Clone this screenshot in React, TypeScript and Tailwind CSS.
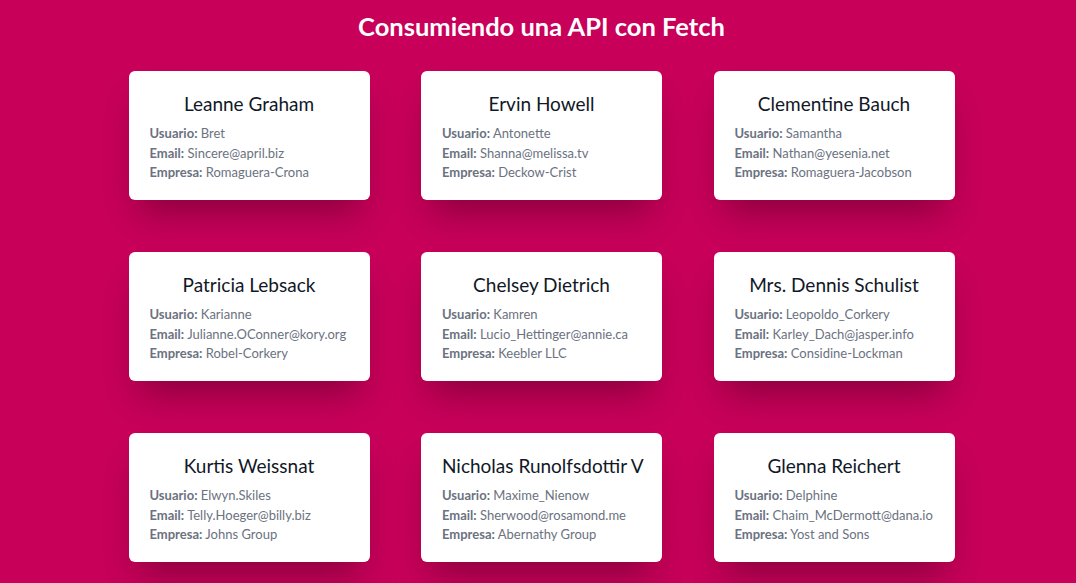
const users = [
  { name: 'Leanne Graham', username: 'Bret', email: 'Sincere@april.biz', company: 'Romaguera-Crona' },
  { name: 'Ervin Howell', username: 'Antonette', email: 'Shanna@melissa.tv', company: 'Deckow-Crist' },
  { name: 'Clementine Bauch', username: 'Samantha', email: 'Nathan@yesenia.net', company: 'Romaguera-Jacobson' },
  { name: 'Patricia Lebsack', username: 'Karianne', email: 'Julianne.OConner@kory.org', company: 'Robel-Corkery' },
  { name: 'Chelsey Dietrich', username: 'Kamren', email: 'Lucio_Hettinger@annie.ca', company: 'Keebler LLC' },
  { name: 'Mrs. Dennis Schulist', username: 'Leopoldo_Corkery', email: 'Karley_Dach@jasper.info', company: 'Considine-Lockman' },
  { name: 'Kurtis Weissnat', username: 'Elwyn.Skiles', email: 'Telly.Hoeger@billy.biz', company: 'Johns Group' },
  { name: 'Nicholas Runolfsdottir V', username: 'Maxime_Nienow', email: 'Sherwood@rosamond.me', company: 'Abernathy Group' },
  { name: 'Glenna Reichert', username: 'Delphine', email: 'Chaim_McDermott@dana.io', company: 'Yost and Sons' },
];

type User = (typeof users)[number];

function UserCard({ user }: { user: User }) {
  return (
    <div className="bg-white rounded-md px-[21px] pt-[20px] pb-[17.5px] shadow-[0_22px_36px_-10px_rgba(60,0,25,0.45)] whitespace-nowrap">
      <h2 className="text-center text-[19px] leading-[26px] text-[#111827] mb-[7px]">{user.name}</h2>
      <div className="text-[13px] leading-[19.5px] text-[#6b7280]">
        <p>
          <span className="font-bold">Usuario:</span> {user.username}
        </p>
        <p>
          <span className="font-bold">Email:</span> {user.email}
        </p>
        <p>
          <span className="font-bold">Empresa:</span> {user.company}
        </p>
      </div>
    </div>
  );
}

export default function App() {
  return (
    <div className="min-h-[583px] bg-[#c8005a] pl-[7px] pt-[9px] pb-6 font-['Lato',sans-serif]">
      <h1 className="text-center text-white font-bold text-[25.5px] leading-[34px]">Consumiendo una API con Fetch</h1>
      <div className="mt-[28px] grid grid-cols-[repeat(3,241px)] justify-center gap-x-[51.5px] gap-y-[52px]">
        {users.map((u) => (
          <UserCard key={u.email} user={u} />
        ))}
      </div>
    </div>
  );
}
